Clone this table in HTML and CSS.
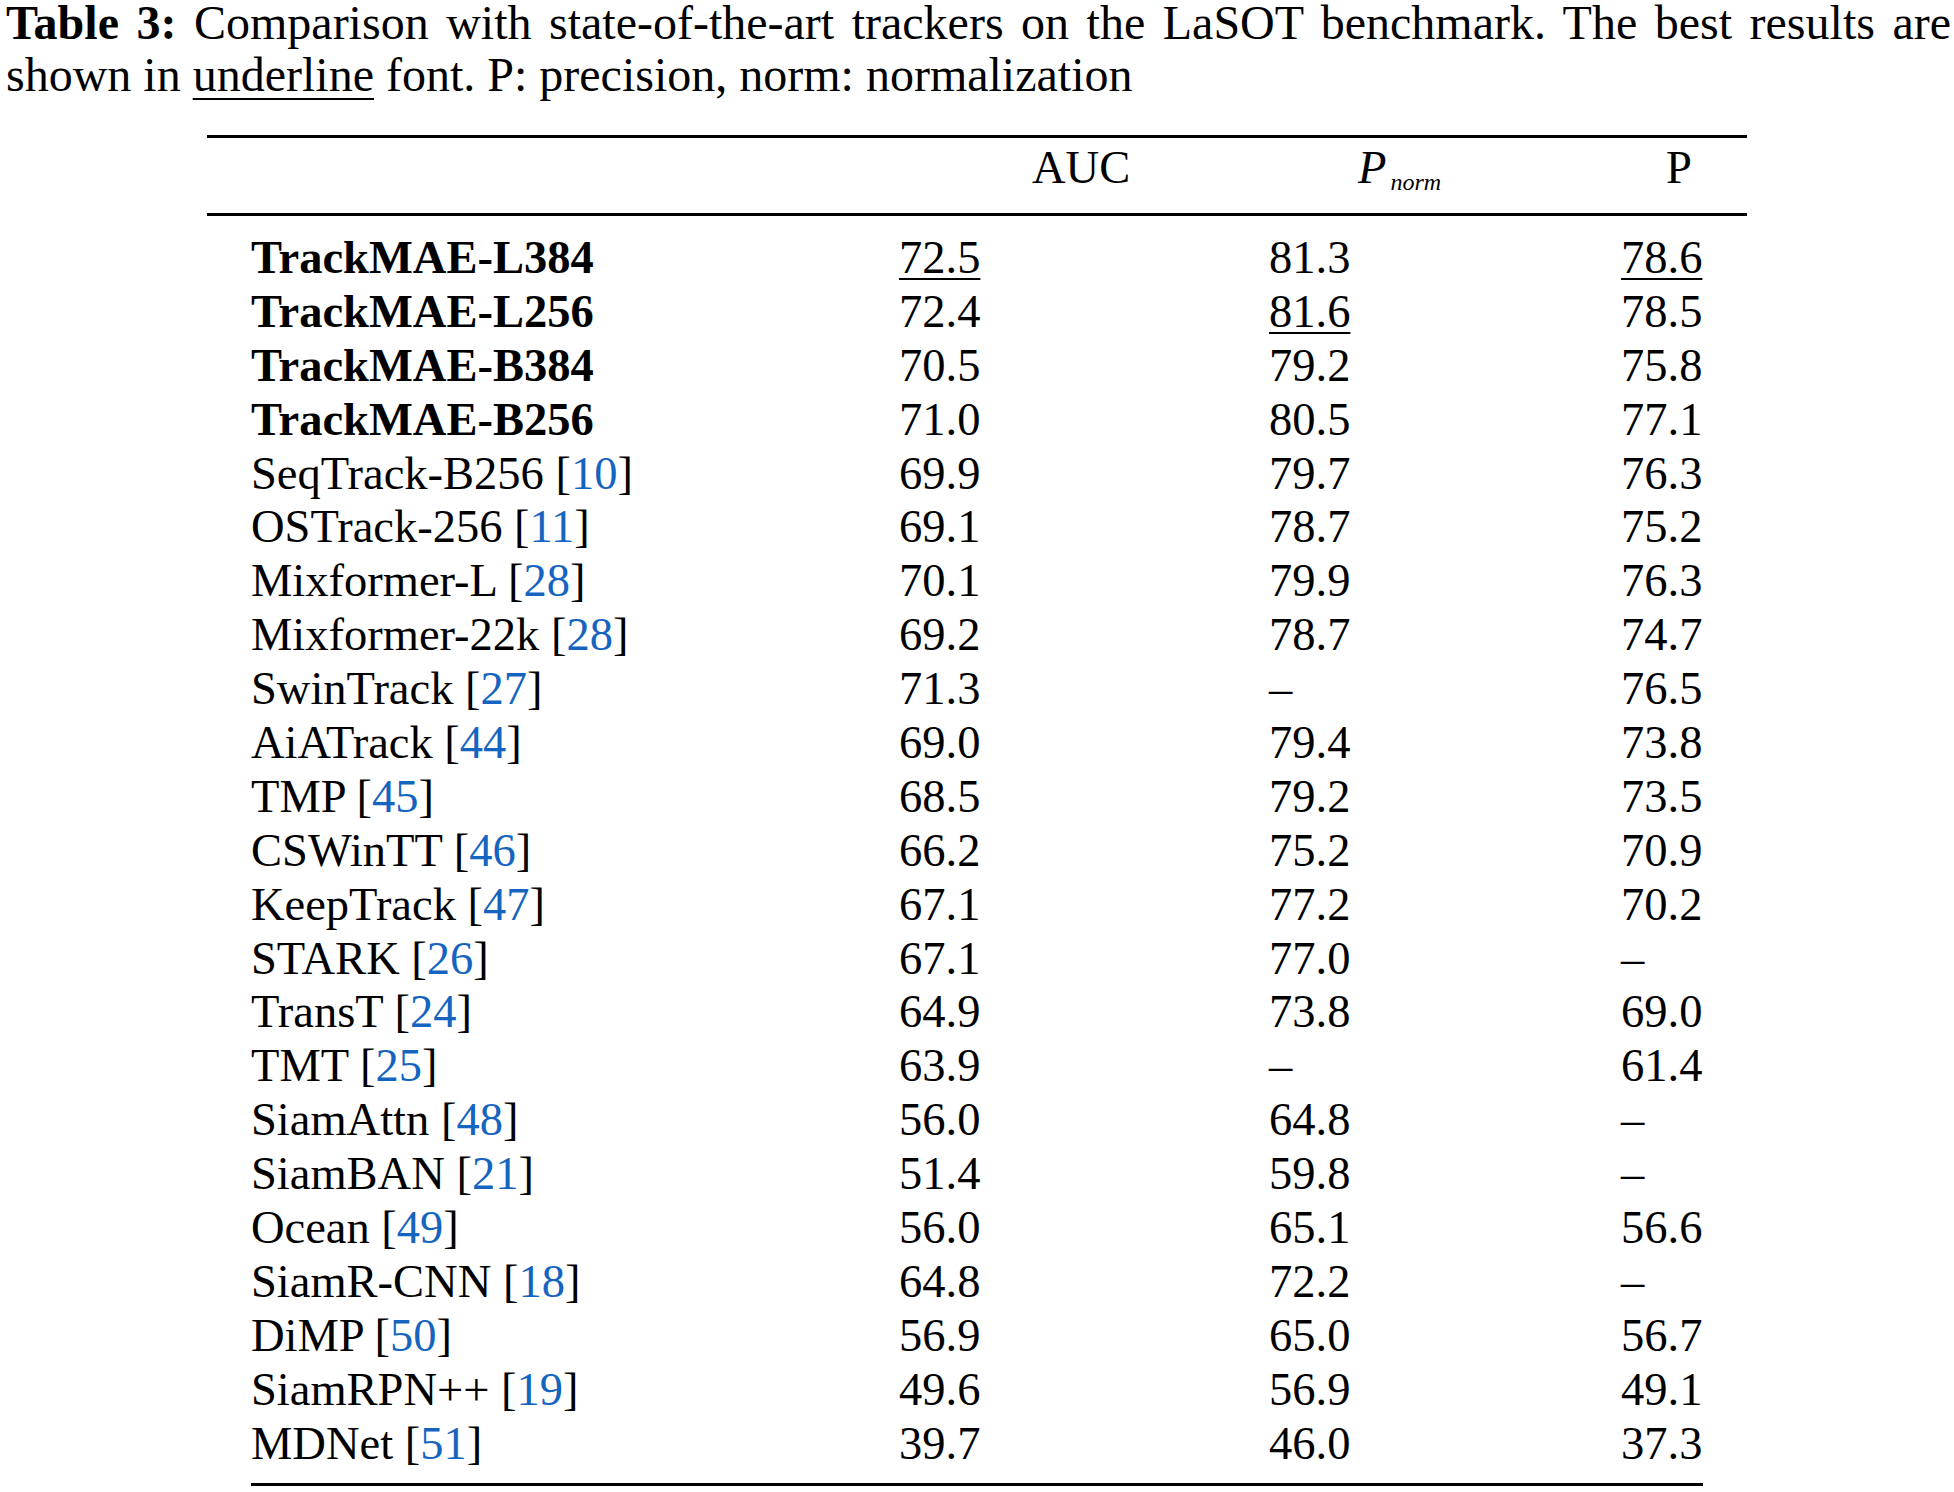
FILE: index.html
```html
<!DOCTYPE html>
<html lang="en">
<head>
<meta charset="utf-8">
<title>Table 3: Comparison on LaSOT</title>
<link rel="stylesheet" href="styles.css">
</head>
<body>
<p class="caption"><b>Table 3:</b> Comparison with state-of-the-art trackers on the LaSOT benchmark. The best results are shown in <u>underline</u> font. P: precision, norm: normalization</p>
<div class="tbl">
  <div class="head">
    <span></span>
    <span>AUC</span>
    <span><i>P</i><sub>norm</sub></span>
    <span>P</span>
  </div>
  <div class="body">
    <span class="name bold">TrackMAE-L384</span><span><u>72.5</u></span><span>81.3</span><span><u>78.6</u></span>
    <span class="name bold">TrackMAE-L256</span><span>72.4</span><span><u>81.6</u></span><span>78.5</span>
    <span class="name bold">TrackMAE-B384</span><span>70.5</span><span>79.2</span><span>75.8</span>
    <span class="name bold">TrackMAE-B256</span><span>71.0</span><span>80.5</span><span>77.1</span>
    <span class="name">SeqTrack-B256 [<a class="ref">10</a>]</span><span>69.9</span><span>79.7</span><span>76.3</span>
    <span class="name">OSTrack-256 [<a class="ref">11</a>]</span><span>69.1</span><span>78.7</span><span>75.2</span>
    <span class="name">Mixformer-L [<a class="ref">28</a>]</span><span>70.1</span><span>79.9</span><span>76.3</span>
    <span class="name">Mixformer-22k [<a class="ref">28</a>]</span><span>69.2</span><span>78.7</span><span>74.7</span>
    <span class="name">SwinTrack [<a class="ref">27</a>]</span><span>71.3</span><span>–</span><span>76.5</span>
    <span class="name">AiATrack [<a class="ref">44</a>]</span><span>69.0</span><span>79.4</span><span>73.8</span>
    <span class="name">TMP [<a class="ref">45</a>]</span><span>68.5</span><span>79.2</span><span>73.5</span>
    <span class="name">CSWinTT [<a class="ref">46</a>]</span><span>66.2</span><span>75.2</span><span>70.9</span>
    <span class="name">KeepTrack [<a class="ref">47</a>]</span><span>67.1</span><span>77.2</span><span>70.2</span>
    <span class="name">STARK [<a class="ref">26</a>]</span><span>67.1</span><span>77.0</span><span>–</span>
    <span class="name">TransT [<a class="ref">24</a>]</span><span>64.9</span><span>73.8</span><span>69.0</span>
    <span class="name">TMT [<a class="ref">25</a>]</span><span>63.9</span><span>–</span><span>61.4</span>
    <span class="name">SiamAttn [<a class="ref">48</a>]</span><span>56.0</span><span>64.8</span><span>–</span>
    <span class="name">SiamBAN [<a class="ref">21</a>]</span><span>51.4</span><span>59.8</span><span>–</span>
    <span class="name">Ocean [<a class="ref">49</a>]</span><span>56.0</span><span>65.1</span><span>56.6</span>
    <span class="name">SiamR-CNN [<a class="ref">18</a>]</span><span>64.8</span><span>72.2</span><span>–</span>
    <span class="name">DiMP [<a class="ref">50</a>]</span><span>56.9</span><span>65.0</span><span>56.7</span>
    <span class="name">SiamRPN++ [<a class="ref">19</a>]</span><span>49.6</span><span>56.9</span><span>49.1</span>
    <span class="name">MDNet [<a class="ref">51</a>]</span><span>39.7</span><span>46.0</span><span>37.3</span>
  </div>
</div>
</body>
</html>
```
FILE: styles.css
```css
html, body {
  margin: 0;
  padding: 0;
  background: #ffffff;
  color: #000000;
}

body {
  font-family: "Liberation Serif", "Times New Roman", serif;
  width: 1954px;
}

.caption {
  margin: -3px 3px 0 6px;
  font-size: 48px;
  line-height: 52px;
  text-align: justify;
}

.caption b {
  font-weight: bold;
}

.caption u {
  text-decoration-thickness: 2px;
  text-underline-offset: 7px;
}

.tbl {
  width: 1540px;
  margin: 34px auto 0;
  font-size: 46.5px;
  line-height: 54px;
}

.head {
  display: grid;
  grid-template-columns: 825px 326px 308px 1fr;
  border-top: 3px solid #000;
  border-bottom: 3px solid #000;
  padding: 3px 0 18px;
  white-space: nowrap;
}

.head i {
  font-style: italic;
}

.head sub {
  font-style: italic;
  font-size: 24px;
  line-height: 0;
  vertical-align: -7px;
  margin-left: 4px;
}

.body {
  display: grid;
  grid-template-columns: 648px 370px 352px 1fr;
  grid-auto-rows: 53.9px;
  align-items: center;
  margin: 0 44px;
  padding: 15px 0 13px;
  border-bottom: 3px solid #000;
  white-space: nowrap;
}

.body .bold {
  font-weight: bold;
}

.body u {
  text-decoration-thickness: 2px;
  text-underline-offset: 5px;
}

.ref {
  color: #1565c0;
  text-decoration: none;
}
```
